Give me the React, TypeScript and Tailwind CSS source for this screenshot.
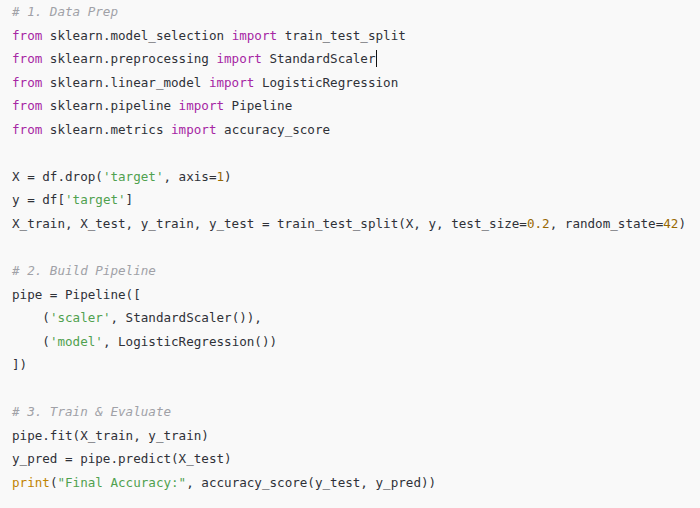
type Tok = [string, string?]

const K = 'text-[#a626a4]'
const C = 'text-[#a0a1a7] italic'
const S = 'text-[#50a14f]'
const N = 'text-[#986801]'
const B = 'text-[#c18401]'

const lines: Tok[][] = [
  [['# 1. Data Prep', C]],
  [['from', K], [' sklearn.model_selection '], ['import', K], [' train_test_split']],
  [['from', K], [' sklearn.preprocessing '], ['import', K], [' StandardScaler'], ['|cursor']],
  [['from', K], [' sklearn.linear_model '], ['import', K], [' LogisticRegression']],
  [['from', K], [' sklearn.pipeline '], ['import', K], [' Pipeline']],
  [['from', K], [' sklearn.metrics '], ['import', K], [' accuracy_score']],
  [],
  [['X = df.drop('], ["'target'", S], [', axis='], ['1', N], [')']],
  [['y = df['], ["'target'", S], [']']],
  [['X_train, X_test, y_train, y_test = train_test_split(X, y, test_size='], ['0.2', N], [', random_state='], ['42', N], [')']],
  [],
  [['# 2. Build Pipeline', C]],
  [['pipe = Pipeline([']],
  [['    ('], ["'scaler'", S], [', StandardScaler()),']],
  [['    ('], ["'model'", S], [', LogisticRegression())']],
  [['])']],
  [],
  [['# 3. Train & Evaluate', C]],
  [['pipe.fit(X_train, y_train)']],
  [['y_pred = pipe.predict(X_test)']],
  [['print', B], ['('], ['"Final Accuracy:"', S], [', accuracy_score(y_test, y_pred))']],
]

export default function App() {
  return (
    <div className="w-[700px] h-[508px] bg-[#f9f9f9] overflow-hidden">
      <pre
        className="pl-3 text-[12.58px] leading-[23.55px] text-[#2f3138] whitespace-pre"
        style={{ fontFamily: '"DejaVu Sans Mono", "Liberation Mono", monospace' }}
      >
        {lines.map((line, i) => (
          <div key={i} className="h-[23.55px]">
            {line.map(([text, cls], j) =>
              text === '|cursor' ? (
                <span key={j} className="inline-block w-px h-[17px] bg-[#111] align-middle -mt-[2px]" />
              ) : (
                <span key={j} className={cls}>{text}</span>
              )
            )}
          </div>
        ))}
      </pre>
    </div>
  )
}
